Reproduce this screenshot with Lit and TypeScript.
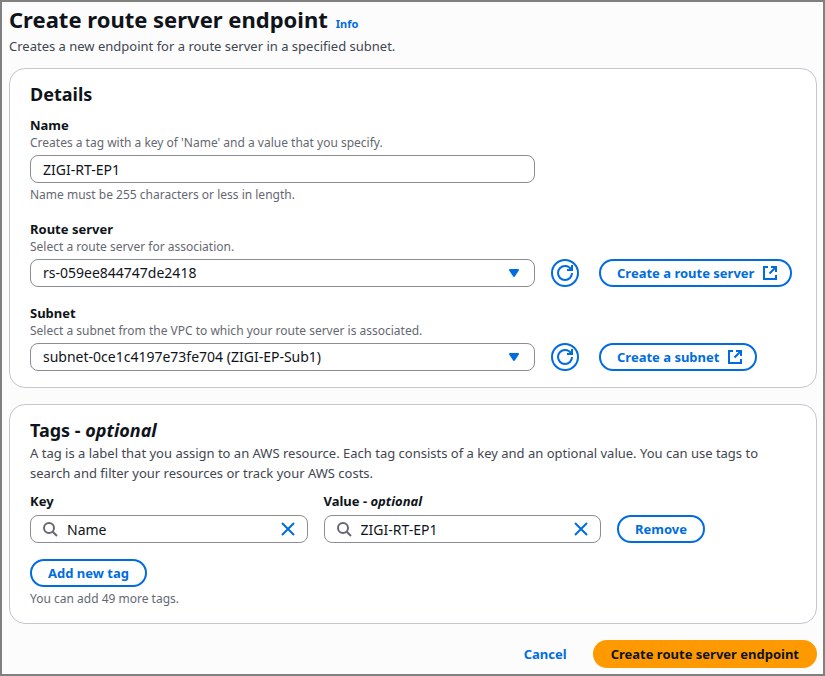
import { LitElement, html, css } from "lit";
import { customElement, state } from "lit/decorators.js";

const refreshIcon = html`<svg class="icon" viewBox="0 0 16 16" aria-hidden="true">
  <path d="M10 5h5V0" />
  <path d="M15 8a7 7 0 0 1-7 7 7 7 0 0 1-7-7 7 7 0 0 1 7-7 6.870 6.870 0 0 1 6.300 4" />
</svg>`;

const externalIcon = html`<svg class="icon" viewBox="0 0 16 16" aria-hidden="true">
  <path d="M6 2H2v12h12v-4" />
  <path d="M9 2h5v5M14 2L7.500 8.500" />
</svg>`;

const searchIcon = html`<svg class="icon search" viewBox="0 0 16 16" aria-hidden="true">
  <circle cx="7" cy="7" r="5" />
  <path d="M10.700 10.700L15 15" />
</svg>`;

const closeIcon = html`<svg class="icon" viewBox="0 0 16 16" aria-hidden="true">
  <path d="M2 2l12 12M14 2L2 14" />
</svg>`;

const caretIcon = html`<svg class="caret" viewBox="0 0 16 16" aria-hidden="true">
  <path d="M4 5h8l-4 6z" />
</svg>`;

interface Tag {
  key: string;
  value: string;
}

@customElement("app-root")
export class AppRoot extends LitElement {
  @state() private tags: Tag[] = [{ key: "Name", value: "ZIGI-RT-EP1" }];

  static styles = css`
    :host {
      display: block;
      box-sizing: border-box;
      min-height: 100vh;
      padding: 2px 6px 6px 7px;
      border: 2px solid #808080;
      background: #fcfcfd;
      color: #0f141a;
      font: 13px/20px "Noto Sans", "Open Sans", sans-serif;
    }
    * {
      box-sizing: border-box;
    }
    h1,
    h2,
    p {
      margin: 0;
    }
    .title {
      display: flex;
      align-items: baseline;
      gap: 8px;
    }
    h1 {
      font-size: 22px;
      line-height: 30px;
      font-weight: 700;
    }
    h2 {
      font-size: 18px;
      line-height: 25px;
      font-weight: 700;
    }
    em {
      font-style: italic;
    }
    .info {
      color: #006ce0;
      font-size: 11px;
      font-weight: 700;
      text-decoration: none;
    }
    .lead {
      color: #424650;
    }
    .page-lead {
      margin-top: 2px;
    }
    .card {
      margin-top: 16px;
      padding: 13px 20px 16px;
      border: 1px solid #c6c6cd;
      border-radius: 16px;
      background: #fff;
    }
    .page-lead + form .card:first-child {
      margin-top: 12px;
    }
    .fields {
      display: grid;
      gap: 16px;
      margin-top: 8px;
    }
    .label {
      display: block;
      font-weight: 700;
    }
    .hint {
      color: #656871;
      font-size: 12px;
      line-height: 16px;
    }
    .row {
      display: grid;
      grid-template-columns: minmax(0, 505px) auto 1fr;
      align-items: center;
      margin-top: 4px;
    }
    .row .round {
      margin: 0 20px 0 16px;
    }
    .row .pill {
      justify-self: start;
    }
    .control {
      display: flex;
      align-items: center;
      position: relative;
    }
    input,
    select {
      width: 100%;
      height: 28px;
      margin: 0;
      padding: 0 12px;
      border: 1px solid #8c8c94;
      border-radius: 8px;
      background: #fff;
      color: inherit;
      font: inherit;
      font-size: 14px;
      appearance: none;
    }
    .constraint {
      margin-top: 4px;
    }
    .caret {
      position: absolute;
      right: 13px;
      width: 16px;
      height: 16px;
      fill: #006ce0;
      stroke: #006ce0;
      stroke-width: 2;
      stroke-linejoin: round;
      pointer-events: none;
    }
    .icon {
      flex: none;
      width: 16px;
      height: 16px;
      fill: none;
      stroke: currentColor;
      stroke-width: 2;
    }
    .search {
      position: absolute;
      left: 12px;
      color: #656871;
    }
    .clear {
      display: flex;
      position: absolute;
      right: 12px;
      padding: 0;
      border: 0;
      background: none;
      color: #006ce0;
    }
    .tag input {
      padding: 0 36px;
    }
    .pill,
    .round,
    .plain {
      display: inline-flex;
      align-items: center;
      justify-content: center;
      gap: 8px;
      height: 28px;
      padding: 0 16px;
      border: 2px solid #006ce0;
      border-radius: 20px;
      background: #fff;
      color: #006ce0;
      font: inherit;
      font-weight: 700;
      white-space: nowrap;
      text-decoration: none;
      cursor: pointer;
    }
    .round {
      width: 28px;
      padding: 0;
    }
    .row .pill {
      padding-right: 12px;
    }
    .plain {
      border-color: transparent;
      background: none;
    }
    .primary {
      border-color: #ff9900;
      background: #ff9900;
      color: #0f141a;
    }
    .tag {
      display: grid;
      grid-template-columns: minmax(0, 1fr) minmax(0, 1fr) 179px;
      gap: 16px;
      align-items: end;
      margin-top: 8px;
    }
    .tag .control {
      margin-top: 4px;
    }
    .tag .pill {
      justify-self: start;
    }
    .add {
      margin-top: 16px;
    }
    .footer {
      display: flex;
      justify-content: flex-end;
      gap: 8px;
      margin-top: 16px;
    }
  `;

  private renderSelect(id: string, label: string, hint: string, value: string, action: string) {
    return html`<div>
      <label class="label" for=${id}>${label}</label>
      <p class="hint">${hint}</p>
      <div class="row">
        <div class="control">
          <select id=${id}>
            <option>${value}</option>
          </select>
          ${caretIcon}
        </div>
        <button class="round" type="button" aria-label="Refresh">${refreshIcon}</button>
        <a class="pill" href="#">${action}${externalIcon}</a>
      </div>
    </div>`;
  }

  private setTag(index: number, change: Partial<Tag>) {
    this.tags = this.tags.map((tag, i) => (i === index ? { ...tag, ...change } : tag));
  }

  private renderTagField(index: number, field: keyof Tag, label: unknown) {
    const id = `${field}-${index}`;
    return html`<div>
      <label class="label" for=${id}>${label}</label>
      <div class="control">
        <input
          id=${id}
          type="text"
          .value=${this.tags[index][field]}
          @input=${(e: Event) => this.setTag(index, { [field]: (e.target as HTMLInputElement).value })}
        />
        ${searchIcon}
        <button class="clear" type="button" aria-label="Clear" @click=${() => this.setTag(index, { [field]: "" })}>
          ${closeIcon}
        </button>
      </div>
    </div>`;
  }

  render() {
    return html`
      <div class="title">
        <h1>Create route server endpoint</h1>
        <a class="info" href="#">Info</a>
      </div>
      <p class="lead page-lead">Creates a new endpoint for a route server in a specified subnet.</p>
      <form @submit=${(e: Event) => e.preventDefault()}>
        <section class="card">
          <h2>Details</h2>
          <div class="fields">
            <div>
              <label class="label" for="name">Name</label>
              <p class="hint">Creates a tag with a key of 'Name' and a value that you specify.</p>
              <div class="row"><input id="name" type="text" value="ZIGI-RT-EP1" /></div>
              <p class="hint constraint">Name must be 255 characters or less in length.</p>
            </div>
            ${this.renderSelect(
              "route-server",
              "Route server",
              "Select a route server for association.",
              "rs-059ee844747de2418",
              "Create a route server",
            )}
            ${this.renderSelect(
              "subnet",
              "Subnet",
              "Select a subnet from the VPC to which your route server is associated.",
              "subnet-0ce1c4197e73fe704 (ZIGI-EP-Sub1)",
              "Create a subnet",
            )}
          </div>
        </section>
        <section class="card">
          <h2>Tags - <em>optional</em></h2>
          <p class="lead">
            A tag is a label that you assign to an AWS resource. Each tag consists of a key and an optional value. You
            can use tags to search and filter your resources or track your AWS costs.
          </p>
          ${this.tags.map(
            (_, i) => html`<div class="tag">
              ${this.renderTagField(i, "key", "Key")}
              ${this.renderTagField(i, "value", html`Value - <em>optional</em>`)}
              <button
                class="pill"
                type="button"
                @click=${() => (this.tags = this.tags.filter((_tag, n) => n !== i))}
              >
                Remove
              </button>
            </div>`,
          )}
          <button
            class="pill add"
            type="button"
            @click=${() => (this.tags = [...this.tags, { key: "", value: "" }])}
          >
            Add new tag
          </button>
          <p class="hint constraint">You can add ${50 - this.tags.length} more tags.</p>
        </section>
        <div class="footer">
          <button class="plain" type="button">Cancel</button>
          <button class="pill primary" type="submit">Create route server endpoint</button>
        </div>
      </form>
    `;
  }
}
